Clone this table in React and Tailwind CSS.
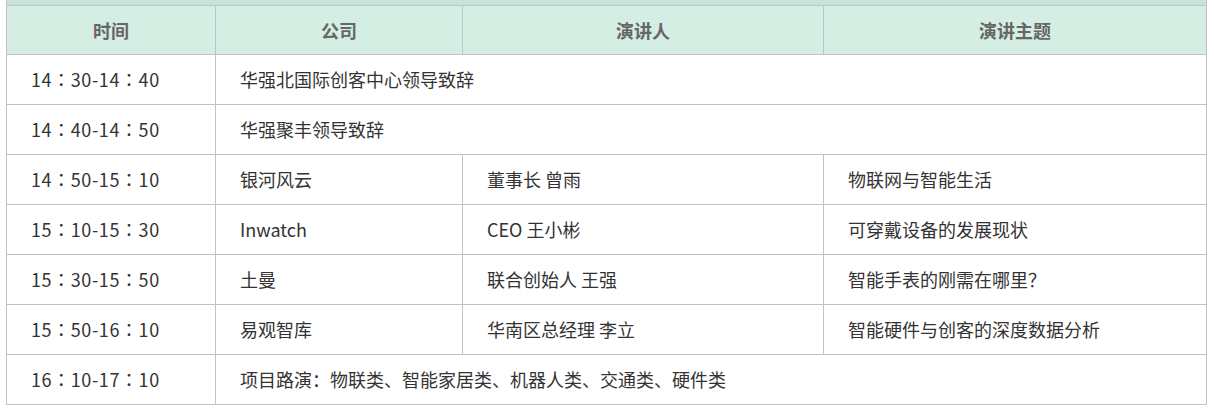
const rows = [
  { time: '14：30-14：40', company: '华强北国际创客中心领导致辞', span: true },
  { time: '14：40-14：50', company: '华强聚丰领导致辞', span: true },
  { time: '14：50-15：10', company: '银河风云', speaker: '董事长 曾雨', topic: '物联网与智能生活' },
  { time: '15：10-15：30', company: 'Inwatch', speaker: 'CEO 王小彬', topic: '可穿戴设备的发展现状' },
  { time: '15：30-15：50', company: '土曼', speaker: '联合创始人 王强', topic: '智能手表的刚需在哪里？' },
  { time: '15：50-16：10', company: '易观智库', speaker: '华南区总经理 李立', topic: '智能硬件与创客的深度数据分析' },
  { time: '16：10-17：10', company: '项目路演：物联类、智能家居类、机器人类、交通类、硬件类', span: true },
];

const cell = 'border border-[#c2c2c2] pl-6 h-[50px] align-middle';
const head = 'border border-[#c2c2c2] h-[49px] text-center font-bold text-[#666]';

export default function App() {
  return (
    <div
      className="bg-white w-[1214px] h-[410px] pl-[6px] text-[18px] text-[#333]"
      style={{ fontFamily: '"Microsoft YaHei", "Noto Sans CJK SC", sans-serif' }}
    >
      <div className="w-[1201px] h-[5px] bg-[#c5e3d8] border-x border-[#c2c2c2]" />
      <table className="w-[1201px] table-fixed border-collapse">
        <colgroup>
          <col className="w-[209px]" />
          <col className="w-[247px]" />
          <col className="w-[361px]" />
          <col />
        </colgroup>
        <thead>
          <tr className="bg-[#d4eee3]">
            <th className={head}>时间</th>
            <th className={head}>公司</th>
            <th className={head}>演讲人</th>
            <th className={head}>演讲主题</th>
          </tr>
        </thead>
        <tbody>
          {rows.map((r) => (
            <tr key={r.time}>
              <td
                className={`${cell} tracking-[0.6px]`}
                style={{ fontFamily: '"Noto Sans CJK TC", sans-serif' }}
              >
                {r.time}
              </td>
              {r.span ? (
                <td className={cell} colSpan={3}>{r.company}</td>
              ) : (
                <>
                  <td className={cell}>{r.company}</td>
                  <td className={cell}>{r.speaker}</td>
                  <td className={cell}>{r.topic}</td>
                </>
              )}
            </tr>
          ))}
        </tbody>
      </table>
    </div>
  );
}
